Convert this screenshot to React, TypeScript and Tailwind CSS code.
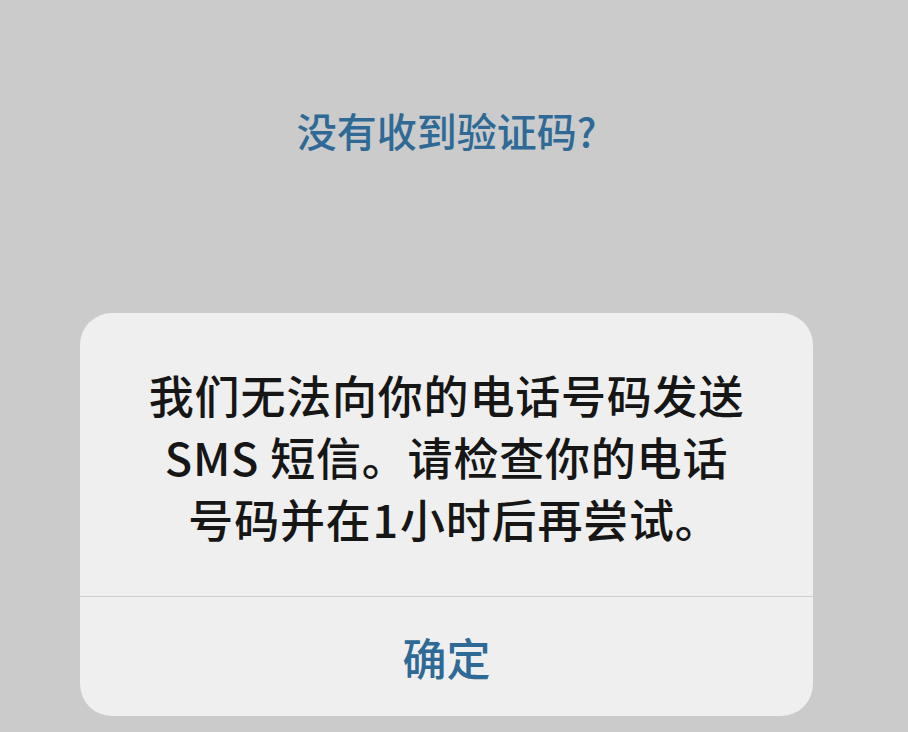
export default function App() {
  return (
    <div
      className="flex h-[732px] w-full flex-col bg-[#cbcbcb]"
      style={{ fontFamily: '"Noto Sans CJK SC", "Noto Sans", sans-serif' }}
    >
      <div className="pt-[106px] pl-[80px] pr-[95px]">
        <p className="text-center text-[40px] leading-[48px] font-medium text-[#2e6a95]">
          没有收到验证码?
        </p>
      </div>

      <div className="mt-[159px] ml-[80px] w-[733px] overflow-hidden rounded-[32px] bg-[#efefef]">
        <div className="px-6 pt-[51px] pb-[46px] text-center text-[45px] leading-[62px] tracking-[0.8px] font-medium text-[#161616]">
          <p>我们无法向你的电话号码发送</p>
          <p>SMS 短信。请检查你的电话</p>
          <p className="pl-[16px]">
            号码并在<span className="mx-[1px]">1</span>小时后再尝试。
          </p>
        </div>
        <div className="h-px bg-[#cfcfcf]" />
        <button
          type="button"
          className="flex h-[119px] w-full items-center justify-center text-[44px] font-medium text-[#2e6a95]"
        >
          确定
        </button>
      </div>
    </div>
  );
}
